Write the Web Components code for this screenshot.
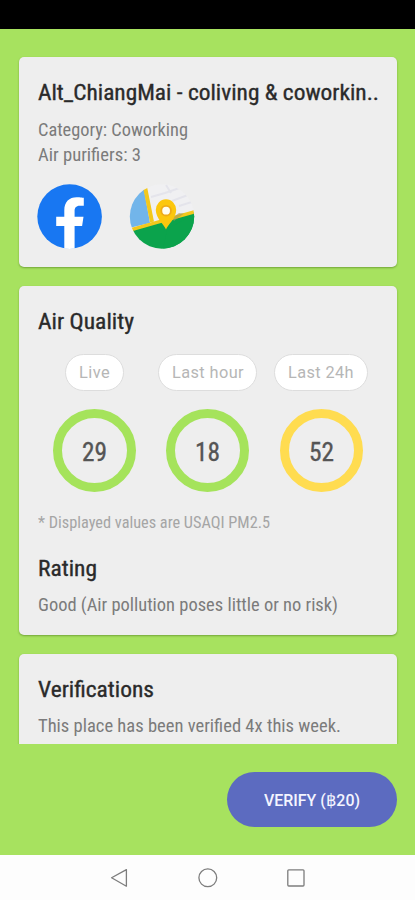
<!DOCTYPE html>
<html lang="en">
<head>
<meta charset="utf-8">
<title>Place details</title>
<style>
html,body{margin:0;height:100%;overflow:hidden}
body{font-family:"Roboto Condensed",Roboto,sans-serif;color:#2b2b2b;background:#a7e25f}
</style>
</head>
<body>
<place-screen></place-screen>
<script>
const define = (name, html, setup) => customElements.define(name, class extends HTMLElement {
  connectedCallback() {
    if (this.shadowRoot) return;
    const t = document.createElement('template');
    t.innerHTML = html;
    this.attachShadow({mode: 'open'}).append(t.content.cloneNode(true));
    if (setup) setup(this, this.shadowRoot);
  }
});

// One line of text, condensed horizontally to the width it is given.
define('fit-text', `
<style>
:host{display:block;white-space:nowrap}
span{display:inline-block;transform-origin:0 50%}
</style><span><slot></slot></span>`, (host, root) => {
  const w = +host.getAttribute('width');
  const s = root.querySelector('span');
  host.style.width = w + 'px';
  s.style.transform = `scaleX(${w / s.getBoundingClientRect().width})`;
});

define('info-card', `
<style>
:host{display:block;box-sizing:border-box;background:#eee;border-radius:5px;padding:0 19px;box-shadow:0 1px 2px rgba(50,90,10,.45);flex:none}
</style><slot></slot>`);

define('card-title', `
<style>
:host{display:block;font-size:22.5px;line-height:28px;font-weight:400;-webkit-text-stroke:.35px #2a2a2a;color:#2a2a2a}
</style><slot></slot>`);

define('card-line', `
<style>
:host{display:block;font-size:18.5px;line-height:25px;color:#7b7b7b}
:host([small]){font-size:16px;line-height:20px;color:#a5a5a5}
</style><slot></slot>`);

define('facebook-link', `
<style>:host{display:block;width:66px;height:66px}svg{display:block}</style>
<svg width="66" height="66" viewBox="0 0 66 66">
<circle cx="32.6" cy="32.5" r="32.3" fill="#1877f2"/>
<path d="M27.3 64.5V42.1H19.2V32.8H27.3V26.2C27.3 17.8 32.2 13.2 39.7 13.2C43.3 13.2 46.8 13.8 46.8 13.8V21.7H42.8C38.8 21.7 37.6 24.2 37.6 26.7V32.8H46.5L45.1 42.1H37.6V64.5Q32.6 65.4 27.3 64.5Z" fill="#fff"/>
</svg>`);

define('map-link', `
<style>:host{display:block;width:66px;height:66px}svg{display:block}</style>
<svg width="66" height="66" viewBox="0 0 66 66">
<defs><clipPath id="c"><circle cx="33" cy="32.5" r="32.2"/></clipPath></defs>
<g clip-path="url(#c)">
<path d="M0 0H66V66H0Z" fill="#f0f0f2"/>
<path d="M22 13L36 9L62 0M37 1L42 9M43 17L64 9M50 22L66 17" fill="none" stroke="#e4e4eb" stroke-width="2"/>
<path d="M0 0H14L21 39L0 44Z" fill="#72b5ea"/>
<path d="M15.8 2L23 38" stroke="#f3c81c" stroke-width="4"/>
<path d="M0 47L27 39L66 28V66H0Z" fill="#0ba34c"/>
<path d="M0 46.3L28 38.3L66 27.7" fill="none" stroke="#f3c81c" stroke-width="3.4"/>
<path d="M38 45L66 29.8V66H34Z" fill="#0ba34c"/>
<path d="M43 34L50 29L55 29.5L45 37Z" fill="#a69a55" opacity=".6"/>
</g>
<path d="M37 45.5C35.5 41 26.8 34.5 26.8 26A10.2 10.7 0 0 1 47.2 26C47.2 34.5 38.5 41 37 45.5Z" fill="#fcc70d"/>
<circle cx="37.1" cy="26.7" r="5.8" fill="#efac16"/>
<circle cx="37.1" cy="26.7" r="3.9" fill="#fffdf0"/>
</svg>`);

define('period-chip', `
<style>
:host{display:flex;box-sizing:border-box;height:37px;border:1px solid #ddd;border-radius:19px;background:#fff;align-items:center;justify-content:center;font:16px/37px Roboto,sans-serif;letter-spacing:.4px;color:#b6b6b6}
</style><slot></slot>`);

define('aqi-ring', `
<style>
:host{display:flex;box-sizing:border-box;width:83px;height:83px;border-radius:50%;border:9px solid var(--ring,#a5e35b);align-items:center;justify-content:center;font-size:25px;line-height:30px;-webkit-text-stroke:.35px #555;color:#555}
div{padding-top:4px}
</style><div><slot></slot></div>`);

define('verify-button', `
<style>
:host{display:flex;width:170px;height:55px;border-radius:27.5px;background:#5c6bc0;color:#f4f5ff;align-items:center;justify-content:center;font:500 16.5px/24px Roboto,sans-serif}
div{padding-top:2px}
</style><div><slot></slot></div>`);

define('system-nav', `
<style>
:host{display:block;height:45px;background:#fdfdfd;flex:none}
svg{display:block}
</style>
<svg width="415" height="45" viewBox="0 0 415 45" fill="none" stroke="#7d7d7d" stroke-width="1.3" stroke-linejoin="round">
<path d="M126.4 14.6V31.2L111.6 22.8Z"/><circle cx="207.8" cy="22.8" r="8.9"/><rect x="287.8" y="14.8" width="16.2" height="16.2" rx="1"/>
</svg>`);

define('place-screen', `
<style>
:host{display:flex;flex-direction:column;width:415px;height:900px;background:#a7e25f}
.status{height:29px;background:#000;flex:none}
.scroll{height:687px;padding:28px 18px 0 19px;display:flex;flex-direction:column;gap:19px;overflow:hidden;flex:none}
info-card{padding-left:18.5px}
.place{height:210px;padding-top:21px}
.lines{margin-top:12px}
.links{display:flex;gap:26px;margin:16px 0 0 -1px}
.air{height:349px;padding-top:21px}
.columns{display:grid;grid-template-columns:113px 114px 113px;justify-items:center;align-items:center}
.chips{margin-top:19px}
.rings{margin-top:18px}
.note{margin-top:21px}
.rating{margin-top:21px}
.desc{margin-top:11px}
.veri{height:130px;padding-top:21px}
.action{flex:1;display:flex;justify-content:flex-end;padding:28px 18px 0 0}
</style>
<div class="status"></div>
<div class="scroll">
<info-card class="place">
<card-title><fit-text width="341">Alt_ChiangMai - coliving &amp; coworkin..</fit-text></card-title>
<div class="lines">
<card-line><fit-text width="150">Category: Coworking</fit-text></card-line>
<card-line><fit-text width="103">Air purifiers: 3</fit-text></card-line>
</div>
<div class="links"><facebook-link></facebook-link><map-link></map-link></div>
</info-card>
<info-card class="air">
<card-title><fit-text width="96">Air Quality</fit-text></card-title>
<div class="columns chips">
<period-chip style="width:59px"><fit-text width="31">Live</fit-text></period-chip>
<period-chip style="width:99px"><fit-text width="72">Last hour</fit-text></period-chip>
<period-chip style="width:94px"><fit-text width="66">Last 24h</fit-text></period-chip>
</div>
<div class="columns rings">
<aqi-ring><fit-text width="25">29</fit-text></aqi-ring>
<aqi-ring><fit-text width="25">18</fit-text></aqi-ring>
<aqi-ring style="--ring:#ffdc50"><fit-text width="25">52</fit-text></aqi-ring>
</div>
<card-line small class="note"><fit-text width="232">* Displayed values are USAQI PM2.5</fit-text></card-line>
<card-title class="rating"><fit-text width="59">Rating</fit-text></card-title>
<card-line class="desc"><fit-text width="300">Good (Air pollution poses little or no risk)</fit-text></card-line>
</info-card>
<info-card class="veri">
<card-title><fit-text width="116">Verifications</fit-text></card-title>
<card-line class="desc"><fit-text width="303">This place has been verified 4x this week.</fit-text></card-line>
</info-card>
</div>
<div class="action"><verify-button><fit-text width="96">VERIFY (฿20)</fit-text></verify-button></div>
<system-nav></system-nav>`);
</script>
</body>
</html>
